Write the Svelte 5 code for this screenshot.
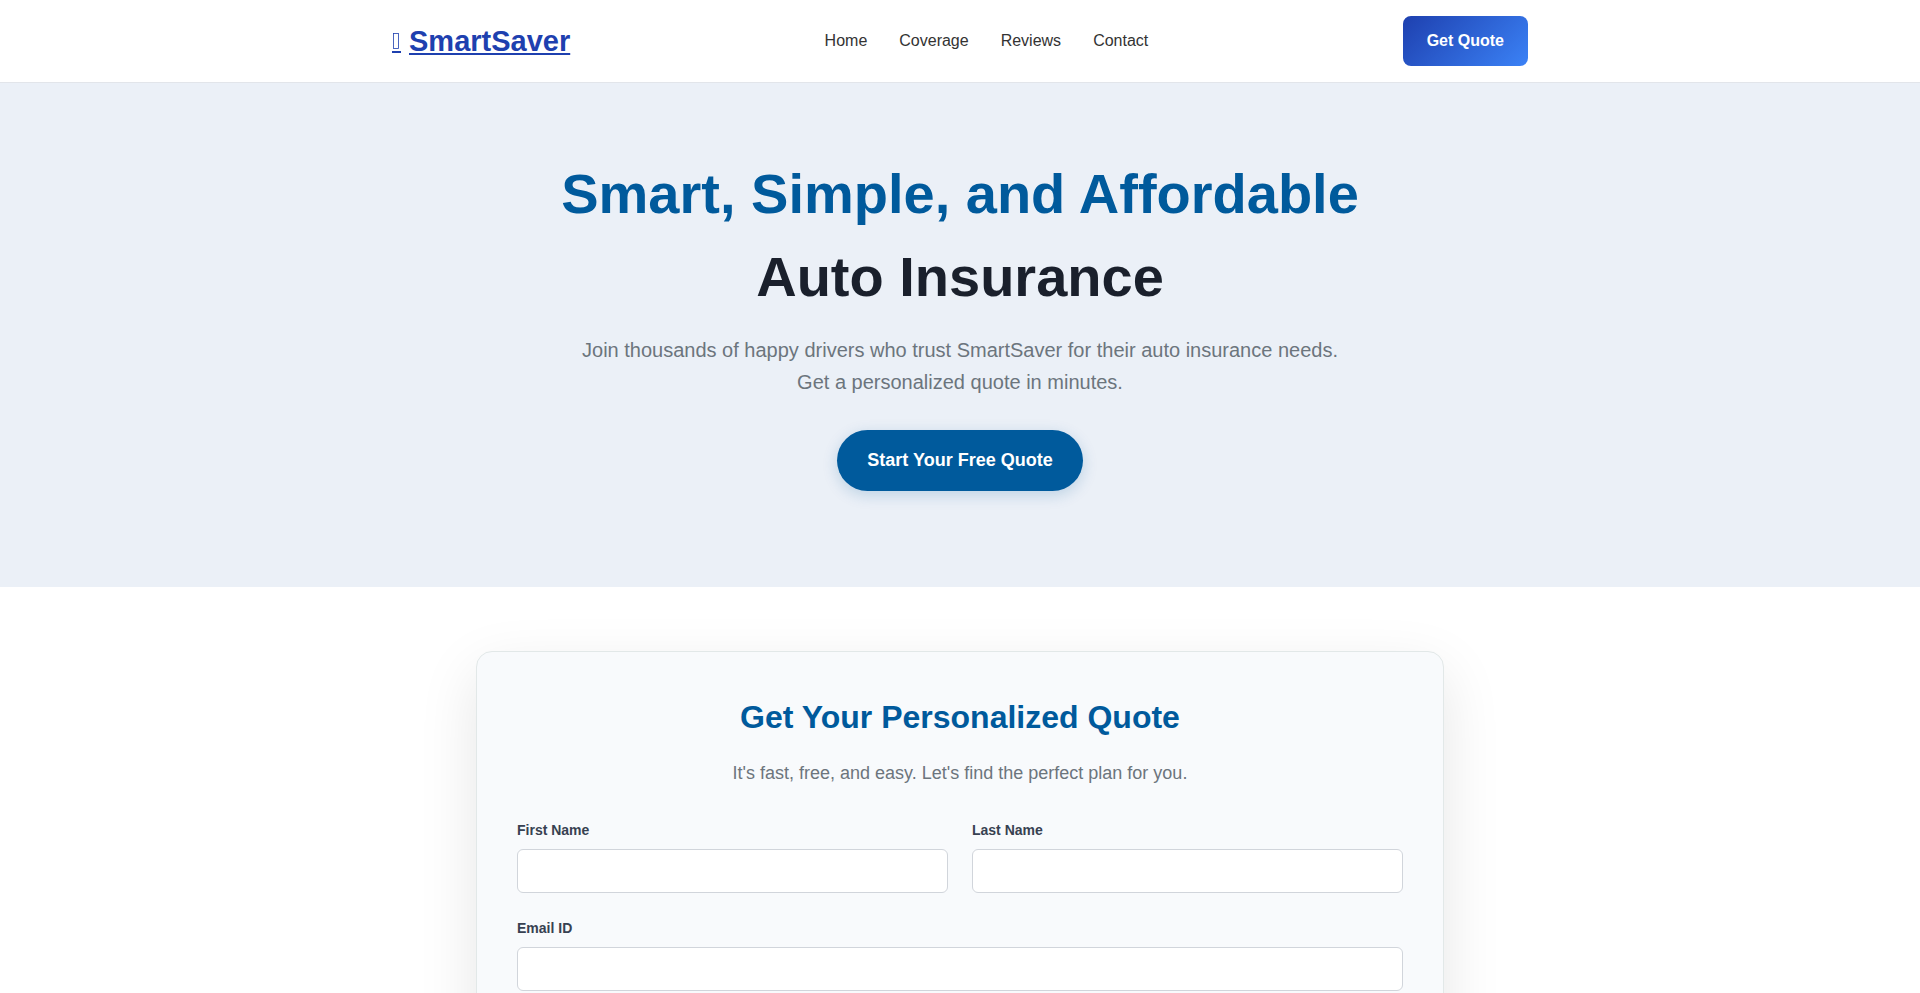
<script lang="ts">
  interface Link {
    href: string;
    label: string;
  }

  const links: Link[] = [
    { href: '#home', label: 'Home' },
    { href: '#coverage', label: 'Coverage' },
    { href: '#reviews', label: 'Reviews' },
    { href: '#contact', label: 'Contact' },
  ];

  let firstName = $state('');
  let lastName = $state('');
  let email = $state('');

  function goToQuote(): void {
    document.getElementById('quote')?.scrollIntoView({ behavior: 'smooth' });
  }
</script>

<header class="site-header">
  <div class="header-inner">
    <a class="logo" href="#home">
      <svg class="logo-icon" width="9" height="20" viewBox="0 0 9 20" aria-hidden="true">
        <rect x="1.5" y="0.5" width="5" height="15" fill="none" stroke="currentColor" stroke-width="0.8" />
        <rect x="0" y="18" width="9" height="2" fill="currentColor" />
      </svg>
      <span>SmartSaver</span>
    </a>
    <nav>
      {#each links as link (link.href)}
        <a href={link.href}>{link.label}</a>
      {/each}
    </nav>
    <button class="btn-header" onclick={goToQuote}>Get Quote</button>
  </div>
</header>

<main>
  <section class="hero" id="home">
    <h1>
      <span class="accent">Smart, Simple, and Affordable</span>
      <span>Auto Insurance</span>
    </h1>
    <p>
      Join thousands of happy drivers who trust SmartSaver for their auto insurance needs. Get a
      personalized quote in minutes.
    </p>
    <button class="btn-hero" onclick={goToQuote}>Start Your Free Quote</button>
  </section>

  <section class="quote" id="quote">
    <form class="card">
      <h2>Get Your Personalized Quote</h2>
      <p>It's fast, free, and easy. Let's find the perfect plan for you.</p>
      <div class="fields">
        <div class="field">
          <label for="first-name">First Name</label>
          <input id="first-name" type="text" bind:value={firstName} />
        </div>
        <div class="field">
          <label for="last-name">Last Name</label>
          <input id="last-name" type="text" bind:value={lastName} />
        </div>
        <div class="field wide">
          <label for="email">Email ID</label>
          <input id="email" type="email" bind:value={email} />
        </div>
      </div>
    </form>
  </section>
</main>

<style>
  :global(body) {
    margin: 0;
    background: #fff;
    color: #333;
    font-family: 'Liberation Sans', Arial, sans-serif;
    font-size: 16px;
    line-height: 26px;
  }
  button {
    border: 0;
    color: #fff;
    font-family: inherit;
    font-weight: 700;
    cursor: pointer;
  }

  .site-header {
    background: #fff;
    border-bottom: 1px solid #e2e5ea;
  }
  .header-inner {
    display: flex;
    align-items: center;
    justify-content: space-between;
    box-sizing: border-box;
    max-width: 1200px;
    margin: 0 auto;
    padding: 16px 32px;
  }
  .logo {
    display: flex;
    align-items: center;
    gap: 8px;
    color: #1e40af;
    font-size: 29px;
    font-weight: 700;
    line-height: 46px;
  }
  .logo-icon {
    display: block;
    margin-top: 4px;
  }
  nav {
    display: flex;
    gap: 32px;
  }
  nav a {
    color: #333;
    text-decoration: none;
  }
  .btn-header {
    padding: 12px 24px;
    border-radius: 8px;
    background: linear-gradient(135deg, #1e40af, #3b82f6);
    font-size: 16px;
    line-height: 26px;
  }

  .hero {
    display: flex;
    flex-direction: column;
    align-items: center;
    padding: 77px 32px 96px;
    background: #ebf0f7;
    text-align: center;
  }
  h1 {
    display: flex;
    flex-direction: column;
    gap: 16px;
    margin: 0 0 24px;
    color: #1a202c;
    font-size: 56px;
    line-height: 67px;
  }
  .accent {
    color: #005a9c;
  }
  .hero p {
    max-width: 768px;
    margin: 0 0 32px;
    color: #6c757d;
    font-size: 20px;
    line-height: 32px;
  }
  .btn-hero {
    padding: 16px 30px;
    border-radius: 50px;
    background: #005a9c;
    box-shadow: 0 4px 15px rgba(0, 90, 156, 0.2);
    font-size: 18px;
    line-height: 29px;
  }

  .quote {
    padding: 64px 32px;
  }
  .card {
    box-sizing: border-box;
    max-width: 968px;
    margin: 0 auto;
    padding: 40px 40px 120px;
    border: 1px solid #e2e8e8;
    border-radius: 16px;
    background: #f8fafc;
    box-shadow: 0 20px 60px rgba(0, 0, 0, 0.1);
  }
  h2 {
    margin: 0 0 16px;
    color: #005a9c;
    font-size: 32px;
    line-height: 51px;
    text-align: center;
  }
  .card p {
    margin: 0 0 32px;
    color: #6c757d;
    font-size: 18px;
    line-height: 28px;
    text-align: center;
  }
  .fields {
    display: grid;
    grid-template-columns: 1fr 1fr;
    gap: 24px;
  }
  .field {
    display: flex;
    flex-direction: column;
    gap: 8px;
  }
  .wide {
    grid-column: 1 / -1;
  }
  label {
    color: #374151;
    font-size: 14px;
    font-weight: 700;
    line-height: 22px;
  }
  input {
    box-sizing: border-box;
    width: 100%;
    height: 44px;
    padding: 12px 16px;
    border: 1px solid #d1d5db;
    border-radius: 6px;
    background: #fff;
    font: inherit;
  }
  input:focus {
    border-color: #005a9c;
    outline: none;
  }
</style>
